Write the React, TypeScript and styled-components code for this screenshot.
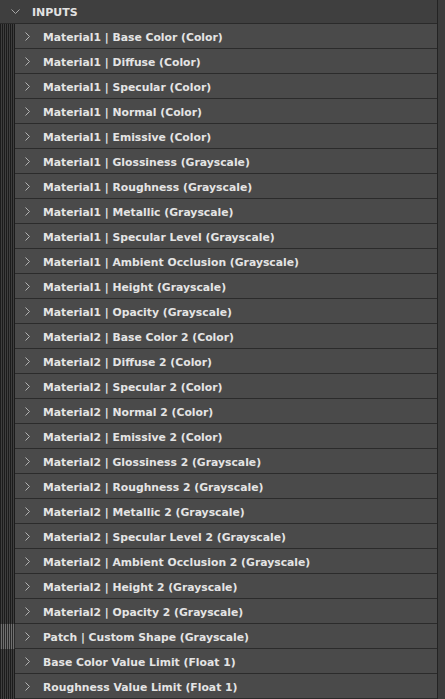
import React from "react";
import styled, { createGlobalStyle } from "styled-components";

const Global = createGlobalStyle`
  html, body { margin: 0; padding: 0; background: #3b3b3b; }
  body { overflow: hidden; }
`;

const Panel = styled.div`
  display: flex;
  width: 445px;
  height: 699px;
  overflow: hidden;
  background: #3b3b3b;
  font-family: "DejaVu Sans", Verdana, sans-serif;
`;

const Main = styled.div`
  display: flex;
  flex-direction: column;
  width: 437px;
  border-right: 1px solid #232323;
`;

const Gutter = styled.div`
  flex: 1;
  background: #3c3c3c;
`;

const Header = styled.div`
  display: flex;
  align-items: center;
  height: 24px;
  box-sizing: border-box;
  border-bottom: 1px solid #2a2a2a;
  background: #3f3f3f;
  padding-left: 11px;
  padding-top: 1px;
  gap: 12px;
  flex: none;
`;

const Title = styled.span`
  font-size: 11px;
  font-weight: bold;
  color: #e2e2e2;
`;

const Row = styled.div`
  display: flex;
  height: 25px;
  flex: none;
`;

const Guides = styled.div<{ $light?: boolean }>`
  width: 15px;
  flex: none;
  background: ${(p) =>
    p.$light
      ? "repeating-linear-gradient(to right, #2a2a2a 0 1px, #707070 1px 2px)"
      : "repeating-linear-gradient(to right, #1c1c1c 0 1px, #3e3e3e 1px 2px)"};
`;

const Cell = styled.div`
  flex: 1;
  display: flex;
  align-items: center;
  gap: 12px;
  padding-left: 10px;
  padding-top: 2px;
  box-sizing: border-box;
  background: #4a4a4a;
  border-bottom: 1px solid #2b2b2b;
`;

const Label = styled.span`
  font-size: 10.8px;
  font-weight: bold;
  color: #e4e4e4;
  white-space: nowrap;
`;

const Chevron = ({ down }: { down?: boolean }) =>
  down ? (
    <svg width="9" height="6" viewBox="0 0 9 6" style={{ flex: "none" }}>
      <polyline points="0.5,0.5 4.5,4.5 8.5,0.5" fill="none" stroke="#a8a8a8" strokeWidth="1" />
    </svg>
  ) : (
    <svg width="6" height="9" viewBox="0 0 6 9" style={{ flex: "none", marginTop: -1 }}>
      <polyline points="0.5,0.5 4.5,4.5 0.5,8.5" fill="none" stroke="#b4b4b4" strokeWidth="1" />
    </svg>
  );

const items = [
  "Material1 | Base Color (Color)",
  "Material1 | Diffuse (Color)",
  "Material1 | Specular (Color)",
  "Material1 | Normal (Color)",
  "Material1 | Emissive (Color)",
  "Material1 | Glossiness (Grayscale)",
  "Material1 | Roughness (Grayscale)",
  "Material1 | Metallic (Grayscale)",
  "Material1 | Specular Level (Grayscale)",
  "Material1 | Ambient Occlusion (Grayscale)",
  "Material1 | Height (Grayscale)",
  "Material1 | Opacity (Grayscale)",
  "Material2 | Base Color 2 (Color)",
  "Material2 | Diffuse 2 (Color)",
  "Material2 | Specular 2 (Color)",
  "Material2 | Normal 2 (Color)",
  "Material2 | Emissive 2 (Color)",
  "Material2 | Glossiness 2 (Grayscale)",
  "Material2 | Roughness 2 (Grayscale)",
  "Material2 | Metallic 2 (Grayscale)",
  "Material2 | Specular Level 2 (Grayscale)",
  "Material2 | Ambient Occlusion 2 (Grayscale)",
  "Material2 | Height 2 (Grayscale)",
  "Material2 | Opacity 2 (Grayscale)",
  "Patch | Custom Shape (Grayscale)",
  "Base Color Value Limit (Float 1)",
  "Roughness Value Limit (Float 1)",
];

export default function App() {
  return (
    <>
      <Global />
      <Panel>
        <Main>
          <Header>
            <Chevron down />
            <Title>INPUTS</Title>
          </Header>
          {items.map((t) => (
            <Row key={t}>
              <Guides $light={t.startsWith("Patch")} />
              <Cell>
                <Chevron />
                <Label>{t}</Label>
              </Cell>
            </Row>
          ))}
        </Main>
        <Gutter />
      </Panel>
    </>
  );
}
